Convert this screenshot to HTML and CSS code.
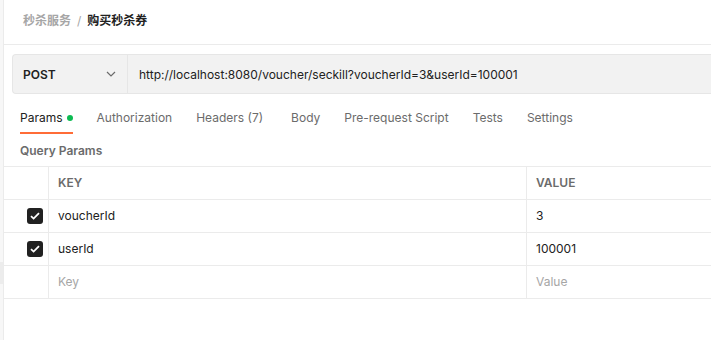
FILE: index.html
```html
<!DOCTYPE html>
<html lang="zh-CN">
<head>
    <meta charset="UTF-8">
    <title>购买秒杀券</title>
    <link rel="stylesheet" href="styles.css">
</head>
<body>
    <div class="app">
        <div class="rail">
            <div class="rail-gap"></div>
            <div class="rail-mark"></div>
        </div>
        <div class="main">
            <div class="crumbs">
                <span class="crumb-parent">秒杀服务</span>
                <span class="crumb-sep">/</span>
                <span class="crumb-current">购买秒杀券</span>
            </div>

            <div class="request">
                <div class="method">
                    <span>POST</span>
                    <svg class="chevron" width="10" height="6" viewBox="0 0 10 6">
                        <path d="M1 1l4 4 4-4" fill="none" stroke="#6b6b6b" stroke-width="1.2"/>
                    </svg>
                </div>
                <div class="url">http://localhost:8080/voucher/seckill?voucherId=3&amp;userId=100001</div>
            </div>

            <div class="tabs">
                <div class="tab active">Params<i class="dot"></i></div>
                <div class="tab">Authorization</div>
                <div class="tab">Headers (7)</div>
                <div class="tab body-tab">Body</div>
                <div class="tab">Pre-request Script</div>
                <div class="tab">Tests</div>
                <div class="tab">Settings</div>
            </div>

            <div class="section-title">Query Params</div>

            <div class="params">
                <div class="row head">
                    <div class="cell check"></div>
                    <div class="cell key">KEY</div>
                    <div class="cell value">VALUE</div>
                </div>
                <div class="row">
                    <div class="cell check"><span class="box"><svg width="10" height="8" viewBox="0 0 10 8"><path d="M1 4.2l2.6 2.4L9 1.2" fill="none" stroke="#fff" stroke-width="1.8"/></svg></span></div>
                    <div class="cell key">voucherId</div>
                    <div class="cell value">3</div>
                </div>
                <div class="row">
                    <div class="cell check"><span class="box"><svg width="10" height="8" viewBox="0 0 10 8"><path d="M1 4.2l2.6 2.4L9 1.2" fill="none" stroke="#fff" stroke-width="1.8"/></svg></span></div>
                    <div class="cell key">userId</div>
                    <div class="cell value">100001</div>
                </div>
                <div class="row">
                    <div class="cell check"></div>
                    <div class="cell key placeholder">Key</div>
                    <div class="cell value placeholder">Value</div>
                </div>
            </div>
        </div>
    </div>
</body>
</html>
```

FILE: styles.css
```css
*{margin:0; padding:0; box-sizing:border-box;}
body{
    width: 711px;
    height: 340px;
    overflow: hidden;
    background: #fff;
    font-family: Inter, "Noto Sans CJK SC", sans-serif;
    color: #212121;
}
.app{
    display: flex;
    height: 340px;
}
.rail{
    width: 3px;
    background: #f7f7f7;
    display: flex;
    flex-direction: column;
}
.rail-gap{
    height: 262px;
}
.rail-mark{
    height: 22px;
    background: #ececec;
}
.main{
    flex: 1;
    border-left: 1px solid #ebebeb;
    display: flex;
    flex-direction: column;
}
.crumbs{
    height: 45px;
    border-bottom: 1px solid #ebebeb;
    padding: 13px 0 0 19px;
    font-size: 12px;
    line-height: 16px;
    font-weight: bold;
    display: flex;
    gap: 6px;
}
.crumb-parent{ color: #a6a6a6; }
.crumb-sep{ color: #a6a6a6; font-weight: normal; }
.crumb-current{ color: #212121; }

.request{
    margin: 9px 0 0 8px;
    height: 40px;
    display: flex;
    background: #f2f2f2;
    border: 1px solid #e6e6e6;
    border-right: none;
    border-radius: 4px 0 0 4px;
}
.method{
    width: 115px;
    border-right: 1px solid #e6e6e6;
    display: flex;
    align-items: center;
    justify-content: space-between;
    padding: 0 10px 0 10px;
    font-size: 12px;
    font-weight: 600;
}
.chevron{ margin-right: 1px; }
.url{
    display: flex;
    align-items: center;
    padding-left: 11px;
    font-size: 12px;
    color: #212121;
}

.tabs{
    display: flex;
    gap: 24px;
    margin-top: 16px;
    padding-left: 16px;
}
.tab{
    font-size: 12px;
    line-height: 16px;
    color: #6b6b6b;
    padding-bottom: 6px;
    border-bottom: 2px solid transparent;
}
.tab.active{
    color: #212121;
    border-bottom-color: #ff6c37;
}
.body-tab{ margin-left: 4px; }
.dot{
    display: inline-block;
    width: 6px;
    height: 6px;
    border-radius: 50%;
    background: #0cbb52;
    vertical-align: 1px;
    margin-left: 4px;
}

.section-title{
    margin: 9px 0 7px 16px;
    font-size: 12px;
    line-height: 16px;
    font-weight: 600;
    color: #6b6b6b;
}

.params{
    border-top: 1px solid #ebebeb;
}
.row{
    display: grid;
    grid-template-columns: 45px 478px 1fr;
    height: 33px;
    border-bottom: 1px solid #ebebeb;
}
.cell{
    display: flex;
    align-items: center;
    padding: 0 0 1px 9px;
    font-size: 12px;
}
.cell.check{
    justify-content: flex-end;
    padding: 0 5px 0 0;
    border-right: 1px solid #ebebeb;
}
.cell.key{
    border-right: 1px solid #ebebeb;
}
.head .cell{
    font-weight: 600;
    color: #6b6b6b;
}
.placeholder{ color: #a6a6a6; }
.box{
    width: 16px;
    height: 16px;
    border-radius: 3px;
    background: #212121;
    display: flex;
    align-items: center;
    justify-content: center;
}
```
